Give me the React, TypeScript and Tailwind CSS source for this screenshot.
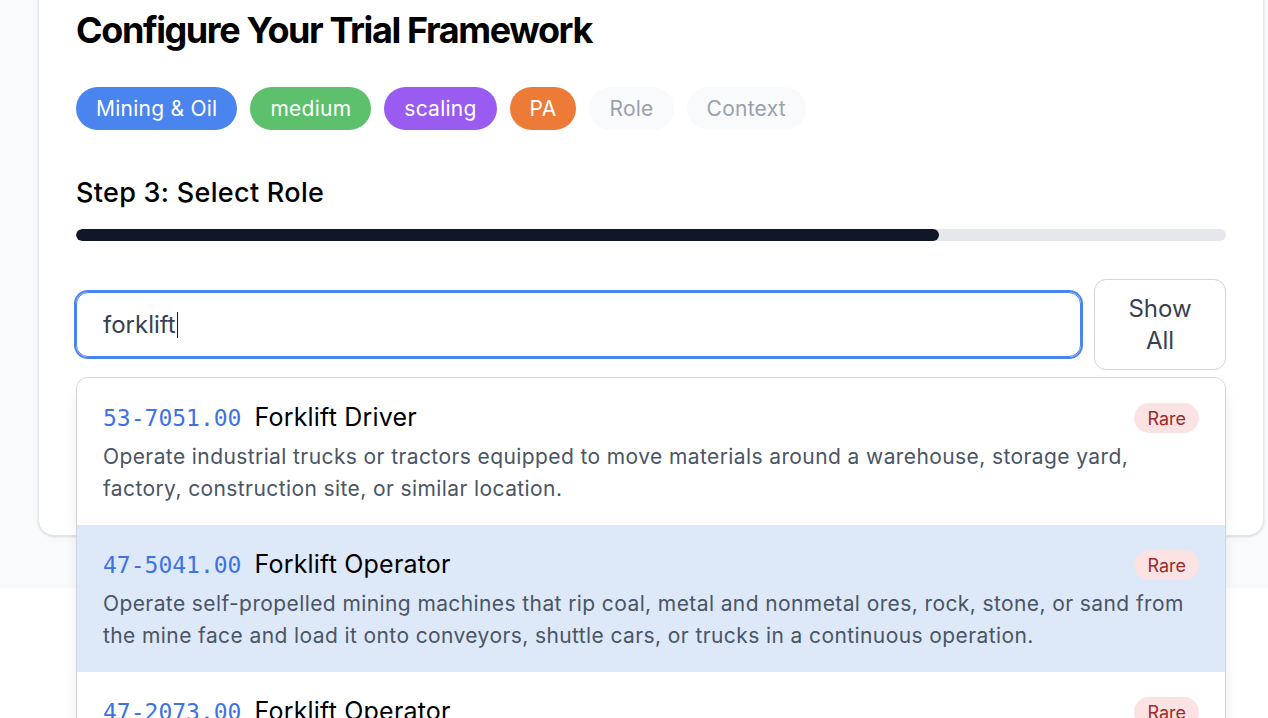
import React from "react";

const items = [
  {
    code: "53-7051.00",
    title: "Forklift Driver",
    lines: [
      "Operate industrial trucks or tractors equipped to move materials around a warehouse, storage yard,",
      "factory, construction site, or similar location.",
    ],
    active: false,
  },
  {
    code: "47-5041.00",
    title: "Forklift Operator",
    lines: [
      "Operate self-propelled mining machines that rip coal, metal and nonmetal ores, rock, stone, or sand from",
      "the mine face and load it onto conveyors, shuttle cars, or trucks in a continuous operation.",
    ],
    active: true,
  },
  {
    code: "47-2073.00",
    title: "Forklift Operator",
    lines: [
      "Operate one or several types of power construction equipment, such as motor graders, bulldozers,",
      "scrapers, compressors, pumps, derricks, shovels, tractors, or front-end loaders.",
    ],
    active: false,
  },
];

const pill = "flex h-[43px] items-center rounded-full px-[20px] text-[21px] tracking-[0.25px]";

export default function App() {
  return (
    <div className="flow-root min-h-screen bg-white" style={{ fontFamily: "Inter, 'Noto Sans', sans-serif" }}>
      <div className="flow-root h-[588px] bg-gray-50">
        <div className="relative -mt-[40px] ml-[38px] w-[1226px] rounded-2xl border border-gray-200 bg-white px-[37px] pt-[47px] pb-[165px] shadow-sm">
          <h1 className="h-[44px] text-[36px] font-bold leading-[44px] tracking-[-1.4px] text-black">
            Configure Your Trial Framework
          </h1>
          <div className="mt-[35px] flex gap-[13px]">
            <span className={`${pill} bg-[#4a84ee] text-white`}>Mining &amp; Oil</span>
            <span className={`${pill} bg-[#5cc06c] text-white`}>medium</span>
            <span className={`${pill} bg-[#9a5cf0] text-white`}>scaling</span>
            <span className={`${pill} bg-[#ec7b38] text-white`}>PA</span>
            <span className={`${pill} bg-gray-50 text-gray-400`}>Role</span>
            <span className={`${pill} bg-gray-50 text-gray-400`}>Context</span>
          </div>
          <h2 className="mt-[45px] text-[27px] font-medium leading-[36px] tracking-[0.3px] text-black">Step 3: Select Role</h2>
          <div className="mt-[18px] h-[12px] w-full overflow-hidden rounded-full bg-gray-200">
            <div className="h-full w-[75%] rounded-full bg-gray-900" />
          </div>
          <div className="relative mt-[38px] flex h-[91px] items-center gap-[13px]">
            <div className="flex h-[65px] flex-1 items-center rounded-xl border border-[#4a84ee] pl-[26px] text-[24px] text-gray-700 ring-2 ring-[#4a84ee]">
              <span>forklift</span>
              <span className="ml-[1px] inline-block h-[26px] w-[1.5px] bg-gray-900" />
            </div>
            <button className="flex h-[91px] w-[132px] flex-col items-center justify-center rounded-xl border border-gray-300 bg-white text-[24px] leading-8 text-gray-700">
              <span>Show</span>
              <span>All</span>
            </button>
            <div className="absolute left-0 right-0 top-[98px] z-10 overflow-hidden rounded-xl border border-gray-300 bg-white shadow-lg">
              {items.map((it, i) => (
                <div
                  key={i}
                  className={`px-[26px] pt-[22px] pb-[20px] ${it.active ? "bg-[#dde8f9]" : "bg-white"}`}
                >
                  <div className="flex h-[36px] items-center justify-between">
                    <div className="flex items-baseline gap-[13px]">
                      <span className="text-[23px] text-[#3d72e3]" style={{ fontFamily: "'DejaVu Sans Mono', monospace" }}>
                        {it.code}
                      </span>
                      <span className="text-[25px] tracking-[0.2px] text-black">{it.title}</span>
                    </div>
                    <span className="flex h-[30px] items-center rounded-full bg-[#fbe3e3] px-[13px] text-[18px] text-[#9b2a2a]">Rare</span>
                  </div>
                  <p className="mt-[5px] whitespace-nowrap text-[21px] leading-[32px] tracking-[0.4px] text-gray-600">
                    {it.lines[0]}
                    <br />
                    {it.lines[1]}
                  </p>
                </div>
              ))}
            </div>
          </div>
        </div>
      </div>
    </div>
  );
}
